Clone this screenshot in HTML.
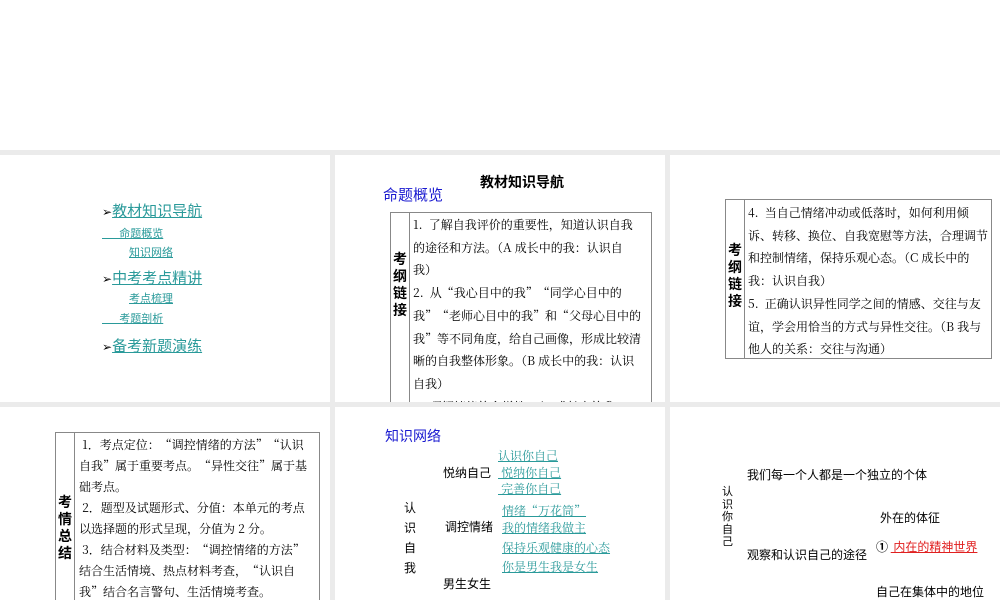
<!DOCTYPE html>
<html><head><meta charset="utf-8"><style>
*{margin:0;padding:0;box-sizing:border-box}
html,body{width:1000px;height:600px;overflow:hidden}
body{background:#fff;position:relative;font-family:"Noto Serif CJK SC","Liberation Serif",serif;color:#000}
.bg{position:absolute;left:0;top:150px;width:1000px;height:450px;background:#ebebeb}
.s{position:absolute;background:#fff;overflow:hidden}
.a{position:absolute;white-space:nowrap}
.l{color:#2a9a9a;text-decoration:underline;font-family:"Noto Sans CJK SC",sans-serif}
.sans{font-family:"Noto Sans CJK SC",sans-serif}
.blue{color:#1a1ad0;font-family:"Noto Sans CJK SC",sans-serif}
.box{position:absolute;border:1px solid #888}
.vl{position:absolute;border-left:1px solid #888;top:0;bottom:0}
.t{position:absolute;font-size:12px;line-height:22.7px;white-space:nowrap;font-family:"Noto Serif CJK SC",serif}
.hd{position:absolute;font-weight:bold;font-size:14px;line-height:17px;width:14px;font-family:"Noto Sans CJK SC",sans-serif}
.ls{font-family:"Noto Serif CJK SC",serif}
</style></head><body>
<div class="bg"></div>

<div class="s" style="left:0;top:155px;width:330px;height:247px">
 <div class="a" style="left:102px;top:45px;font-size:15px"><span style="font-family:'DejaVu Sans',sans-serif;font-size:12px">➢</span><span class="l">教材知识导航</span></div>
 <div class="a l" style="left:102px;top:70px;font-size:11px">&nbsp;&nbsp;&nbsp;&nbsp;&nbsp;&nbsp;&nbsp;命题概览</div>
 <div class="a l" style="left:129px;top:89px;font-size:11px">知识网络</div>
 <div class="a" style="left:102px;top:112px;font-size:15px"><span style="font-family:'DejaVu Sans',sans-serif;font-size:12px">➢</span><span class="l">中考考点精讲</span></div>
 <div class="a l" style="left:129px;top:135px;font-size:11px">考点梳理</div>
 <div class="a l" style="left:102px;top:155px;font-size:11px">&nbsp;&nbsp;&nbsp;&nbsp;&nbsp;&nbsp;&nbsp;考题剖析</div>
 <div class="a" style="left:102px;top:180px;font-size:15px"><span style="font-family:'DejaVu Sans',sans-serif;font-size:12px">➢</span><span class="l">备考新题演练</span></div>
</div>

<div class="s" style="left:335px;top:155px;width:330px;height:247px">
 <div class="a sans" style="left:145px;top:17px;font-size:14px;font-weight:bold">教材知识导航</div>
 <div class="a blue" style="left:48px;top:29px;font-size:15px">命题概览</div>
 <div class="box" style="left:55px;top:57px;width:262px;height:200px">
  <div class="vl" style="left:18px"></div>
  <div class="hd" style="left:2px;top:38px">考纲链接</div>
  <div class="t" style="left:22px;top:1px">1.&nbsp;&nbsp;了解自我评价的重要性，知道认识自我<br>的途径和方法。（A 成长中的我：认识自<br>我）<br>2.&nbsp;&nbsp;从“我心目中的我”“同学心目中的<br>我”“老师心目中的我”和“父母心目中的<br>我”等不同角度，给自己画像，形成比较清<br>晰的自我整体形象。（B 成长中的我：认识<br>自我）<br>3.&nbsp;&nbsp;理解情绪的多样性。（B 成长中的我：<br>认识自我）</div>
 </div>
</div>

<div class="s" style="left:670px;top:155px;width:330px;height:247px">
 <div class="box" style="left:55px;top:44px;width:267px;height:160px">
  <div class="vl" style="left:18px"></div>
  <div class="hd" style="left:2px;top:42px">考纲链接</div>
  <div class="t" style="left:22px;top:2px">4.&nbsp;&nbsp;当自己情绪冲动或低落时，如何利用倾<br>诉、转移、换位、自我宽慰等方法，合理调节<br>和控制情绪，保持乐观心态。（C 成长中的<br>我：认识自我）<br>5.&nbsp;&nbsp;正确认识异性同学之间的情感、交往与友<br>谊，学会用恰当的方式与异性交往。（B 我与<br>他人的关系：交往与沟通）</div>
 </div>
</div>

<div class="s" style="left:0;top:407px;width:330px;height:193px">
 <div class="box" style="left:55px;top:25px;width:265px;height:200px">
  <div class="vl" style="left:18px"></div>
  <div class="hd" style="left:2px;top:61px">考情总结</div>
  <div class="t" style="left:23px;top:1px;line-height:21px">&nbsp;1．考点定位：“调控情绪的方法”“认识<br>自我”属于重要考点。“异性交往”属于基<br>础考点。<br>&nbsp;2．题型及试题形式、分值：本单元的考点<br>以选择题的形式呈现，分值为 2 分。<br>&nbsp;3．结合材料及类型：“调控情绪的方法”<br>结合生活情境、热点材料考查，“认识自<br>我”结合名言警句、生活情境考查。</div>
 </div>
</div>

<div class="s" style="left:335px;top:407px;width:330px;height:193px">
 <div class="a blue" style="left:50px;top:19px;font-size:14px">知识网络</div>
 <div class="a sans" style="left:108px;top:57px;font-size:12px">悦纳自己</div>
 <div class="a sans" style="left:69px;top:91px;font-size:12px;line-height:20px;white-space:normal;width:14px">认<br>识<br>自<br>我</div>
 <div class="a sans" style="left:110px;top:111px;font-size:12px">调控情绪</div>
 <div class="a sans" style="left:108px;top:168px;font-size:12px">男生女生</div>
 <div class="a l ls" style="left:163px;top:41px;font-size:12px;line-height:16.5px">认识你自己<br>&nbsp;悦纳你自己<br>&nbsp;完善你自己</div>
 <div class="a l ls" style="left:167px;top:96px;font-size:12px;line-height:16.5px">情绪“万花筒”<br>我的情绪我做主</div>
 <div class="a l ls" style="left:167px;top:132px;font-size:12px">保持乐观健康的心态</div>
 <div class="a l ls" style="left:167px;top:151px;font-size:12px">你是男生我是女生</div>
</div>

<div class="s" style="left:670px;top:407px;width:330px;height:193px">
 <div class="a sans" style="left:52px;top:78px;font-size:11px;line-height:12.5px;width:12px;white-space:normal">认识你自己</div>
 <div class="a sans" style="left:77px;top:59px;font-size:12px">我们每一个人都是一个独立的个体</div>
 <div class="a sans" style="left:210px;top:102px;font-size:12px">外在的体征</div>
 <div class="a sans" style="left:77px;top:139px;font-size:12px">观察和认识自己的途径</div>
 <div class="a sans" style="left:206px;top:131px;font-size:12px"><b>①</b> <span style="color:#e02020;text-decoration:underline">&nbsp;内在的精神世界</span></div>
 <div class="a sans" style="left:206px;top:176px;font-size:12px">自己在集体中的地位</div>
</div>
</body></html>
